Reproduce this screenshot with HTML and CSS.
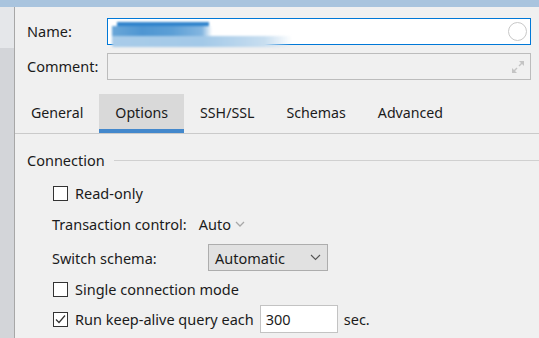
FILE: index.html
```html
<!DOCTYPE html>
<html lang="en">
<head>
    <meta charset="UTF-8">
    <title>Connection settings</title>
    <link rel="stylesheet" href="styles.css">
</head>
<body>
    <div class="titlebar"></div>
    <div class="window">
        <div class="sidebar">
            <span class="side-arrow"></span>
            <div class="side-block"></div>
        </div>

        <main class="content">
            <div class="head-form">
                <label class="field-label">Name:</label>
                <div class="text-input active">
                    <div class="redacted"></div>
                    <span class="clear-circle"></span>
                </div>
                <label class="field-label">Comment:</label>
                <div class="text-input muted">
                    <svg class="expand-icon" width="14" height="14" viewBox="0 0 14 14">
                        <path d="M8 1h5v5l-2-2-2.5 2.5-1-1L10 3z" fill="#c4c4c4"/>
                        <path d="M6 13H1V8l2 2 2.5-2.5 1 1L4 11z" fill="#c4c4c4"/>
                    </svg>
                </div>
            </div>

            <nav class="tabs">
                <a class="tab">General</a>
                <a class="tab selected">Options</a>
                <a class="tab">SSH/SSL</a>
                <a class="tab">Schemas</a>
                <a class="tab">Advanced</a>
            </nav>

            <section class="options">
                <div class="group-title">
                    <span>Connection</span>
                    <span class="group-line"></span>
                </div>

                <div class="row check-row first">
                    <span class="checkbox"></span>
                    <span>Read-only</span>
                </div>
                <div class="row plain-row">
                    <span>Transaction control:</span>
                    <span class="auto-select">Auto
                        <svg width="10" height="6" viewBox="0 0 10 6"><path d="M1 1l4 4 4-4" fill="none" stroke="#a8a8a8" stroke-width="1.3"/></svg>
                    </span>
                </div>
                <div class="row plain-row schema-row">
                    <span class="schema-label">Switch schema:</span>
                    <span class="combo">Automatic
                        <svg width="11" height="7" viewBox="0 0 11 7"><path d="M1 1l4.5 4.5L10 1" fill="none" stroke="#555" stroke-width="1.1"/></svg>
                    </span>
                </div>
                <div class="row check-row">
                    <span class="checkbox"></span>
                    <span>Single connection mode</span>
                </div>
                <div class="row check-row">
                    <span class="checkbox checked">
                        <svg width="13" height="13" viewBox="0 0 13 13"><path d="M2 6.5l3 3 6-7" fill="none" stroke="#333" stroke-width="1.2"/></svg>
                    </span>
                    <span>Run keep-alive query each</span>
                    <span class="num-input">300</span>
                    <span class="unit">sec.</span>
                </div>
            </section>
        </main>
    </div>
</body>
</html>
```

FILE: styles.css
```css
:root {
    --bg: #f0f0f0;
    --text: #1b1b1b;
    --border: #bcbcbc;
    --accent: #0078d7;
}

body {
    margin: 0;
    width: 539px;
    height: 338px;
    overflow: hidden;
    background: var(--bg);
    color: var(--text);
    font-family: "Noto Sans", sans-serif;
    font-size: 14.5px;
}

.titlebar {
    height: 7px;
    background: #a9c4de;
}

.window {
    display: flex;
    height: 331px;
}

.sidebar {
    width: 14px;
    background: #e5e7ea;
    border-right: 1px solid #a7a7a7;
    display: flex;
    flex-direction: column;
}

.side-arrow {
    height: 41px;
}

.side-block {
    flex: 1;
    background: #d3d5d9;
}

.content {
    flex: 1;
    display: flex;
    flex-direction: column;
}

/* name / comment */
.head-form {
    display: grid;
    grid-template-columns: 80px 1fr;
    row-gap: 8px;
    padding: 11px 8px 0 12px;
    align-items: center;
}

.field-label {
    line-height: 27px;
}

.text-input {
    height: 25px;
    border: 1px solid var(--border);
    display: flex;
    align-items: center;
    justify-content: flex-end;
    padding: 0 6px;
    position: relative;
}

.text-input.active {
    border-color: var(--accent);
    background: #fff;
}

.redacted {
    position: absolute;
    left: 4px;
    top: 2px;
    width: 180px;
    height: 27px;
    background:
        linear-gradient(#2f83cc, #2f83cc) 5px 1px / 92px 4px no-repeat,
        linear-gradient(90deg, #6aa7d8, #4f96d2 30%, #5c9fd6 60%, #84b6e0 90%, transparent) 0 5px / 100px 10px no-repeat,
        linear-gradient(90deg, #a9cce9, #a3c9e8 50%, #c8def0 85%, transparent) 0 15px / 180px 11px no-repeat;
    filter: blur(0.8px);
    border-radius: 4px;
}

.clear-circle {
    width: 17px;
    height: 17px;
    border: 1px solid #c8c8c8;
    border-radius: 50%;
    margin-right: -3px;
}

.expand-icon {
    margin-right: -1px;
}

/* tabs */
.tabs {
    display: flex;
    margin-top: 14px;
    border-bottom: 1px solid #cacaca;
    font-size: 14.2px;
}

.tab {
    padding: 2px 16px 0;
    line-height: 33px;
    border-bottom: 4px solid transparent;
}

.tab.selected {
    background: #d9d9d9;
    border-bottom-color: #4388cc;
}

/* options panel */
.options {
    padding: 15px 0 0 12px;
}

.group-title {
    display: flex;
    align-items: center;
    gap: 9px;
    height: 22px;
}

.group-line {
    flex: 1;
    border-top: 1px solid #d0d0d0;
}

.row {
    display: flex;
    align-items: center;
    margin-left: 25px;
}

.check-row {
    height: 30px;
    gap: 7px;
    margin-left: 26px;
}

.check-row.first {
    margin-top: 7px;
}

.plain-row {
    height: 31px;
}

.schema-row {
    height: 35px;
    padding-top: 2px;
    box-sizing: border-box;
}

.checkbox {
    width: 13px;
    height: 13px;
    border: 1px solid #333;
    background: #fff;
    display: flex;
}

.auto-select {
    margin-left: 12px;
    display: flex;
    align-items: center;
    gap: 4px;
}

.schema-label {
    width: 156px;
}

.combo {
    width: 106px;
    height: 25px;
    border: 1px solid #adadad;
    background: #e1e1e1;
    display: flex;
    align-items: center;
    justify-content: space-between;
    padding: 0 6px;
    box-sizing: content-box;
}

.num-input {
    width: 71px;
    height: 26px;
    border: 1px solid #c3c3c3;
    background: #fff;
    line-height: 26px;
    padding-left: 5px;
    margin-left: -1px;
}

.unit {
    margin-left: -1px;
}
```
